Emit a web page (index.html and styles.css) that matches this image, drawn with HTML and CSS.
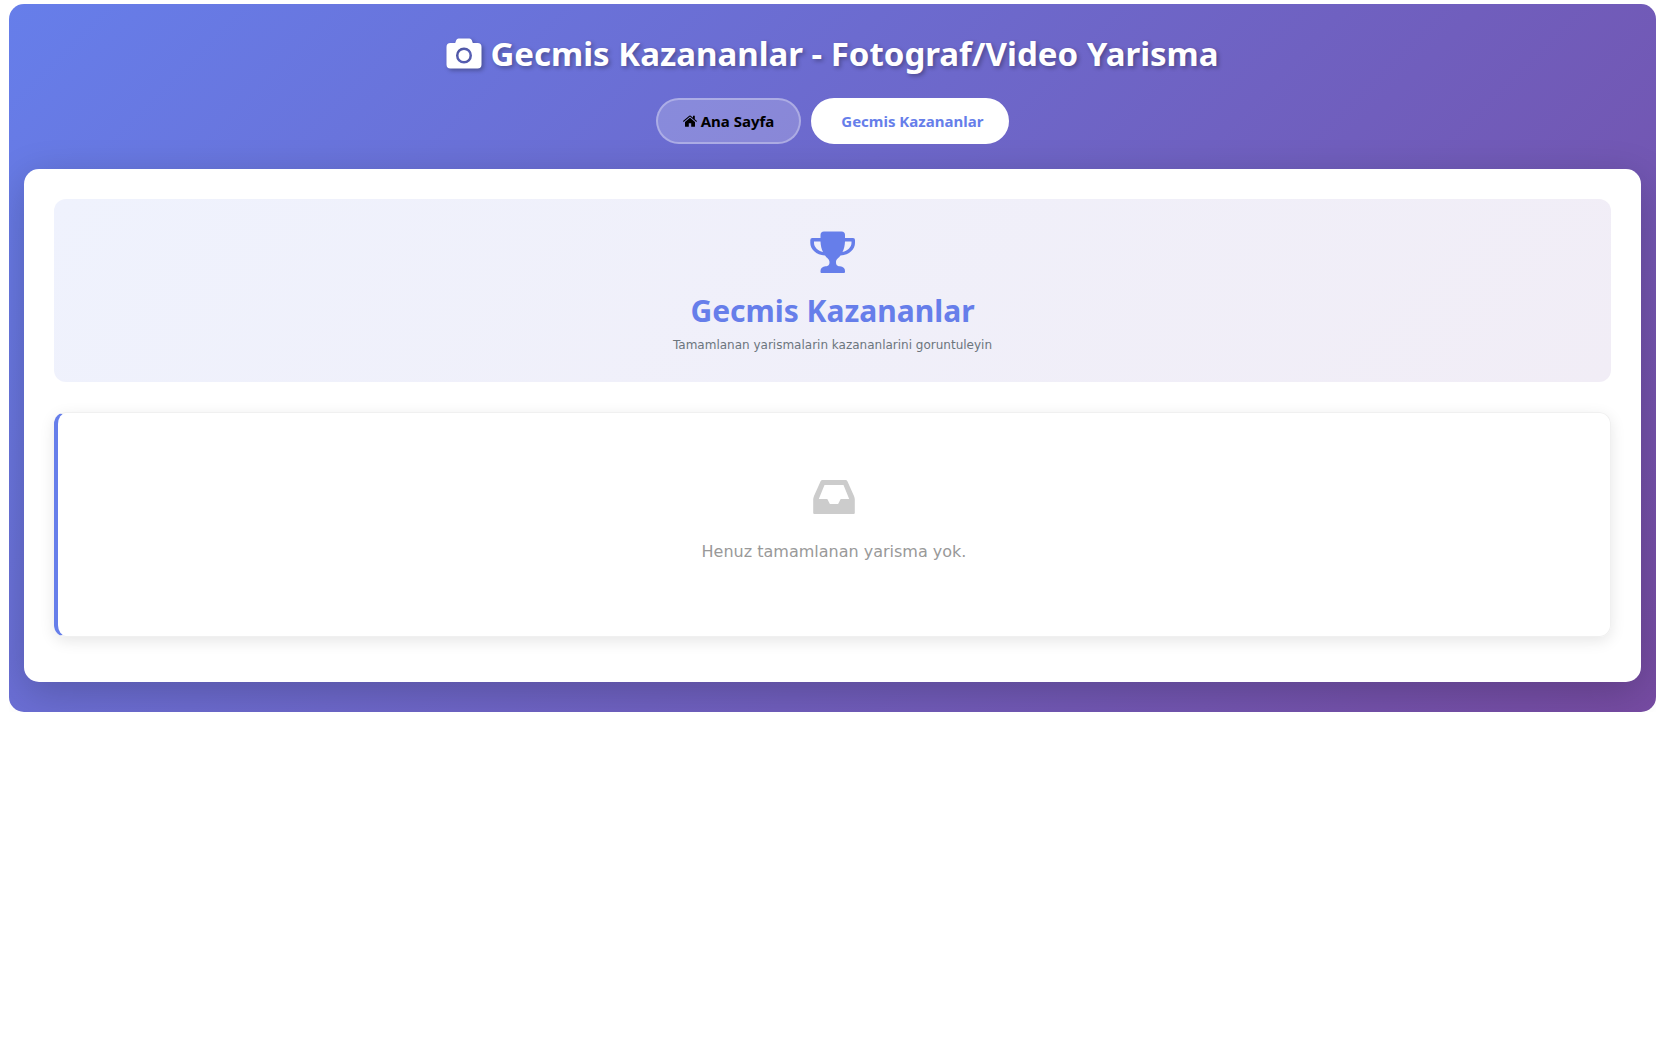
FILE: index.html
```html
<!DOCTYPE html>
<html lang="tr">
<head>
<meta charset="utf-8">
<title>Gecmis Kazananlar</title>
<link rel="stylesheet" href="styles.css">
</head>
<body>
<div class="contest">
  <header class="header">
    <h1 class="title">
      <svg class="title-icon" viewBox="0 0 36 32" aria-hidden="true"><path fill-rule="evenodd" d="M12.500 .5h11q1.600 0 2.200 1.500L26.800 5H31.500q4 0 4 4V26.500q0 4-4 4H4.500q-4 0-4-4V9q0-4 4-4H9.200L10.300 2Q10.900 .5 12.500 .5ZM18 9.500a8 8 0 1 0 0 16a8 8 0 0 0 0-16ZM18 12a5.500 5.500 0 1 1 0 11a5.500 5.500 0 0 1 0-11Z"/></svg>
      Gecmis Kazananlar - Fotograf/Video Yarisma
    </h1>
    <nav class="nav">
      <a class="nav-link" href="#home">
        <svg class="home-icon" viewBox="0 0 14 12" aria-hidden="true"><path d="M7 2.800 2 7v4.200q0 .6.600.6H5.800V8.200h2.400v3.600h3.200q.6 0 .6-.6V7ZM.6 6.900 7 1.600l6.400 5.300.6-.8-2.200-1.800V.8H10v2L7.700.8Q7 .3 6.300.8L0 6.100Z"/></svg>
        Ana Sayfa
      </a>
      <a class="nav-link nav-link-active" href="#winners">Gecmis Kazananlar</a>
    </nav>
  </header>
  <main class="content">
    <section class="hero">
      <svg class="trophy" viewBox="0 0 45 42" aria-hidden="true"><path fill-rule="evenodd" d="M14 .5H31.500Q35 .5 35 4V7H43q2 0 2 2v3c0 6-5.500 12-14.500 12.500C29 27 26 28 26 31c0 3 1 4 4 4.300 3 .3 5 2 5 4.700v1q0 1-1 1H11.500q-1 0-1-1v-1c0-2.700 2-4.400 5-4.700 3-.3 4-1.300 4-4.300 0-3-3-4-4.500-6.500C6 24 .3 18 .3 12V9q0-2 2-2h8.200V4Q10.500.5 14 .5ZM4 10.500V12c0 4 4 8 9 9-1.500-3-2.300-6.500-2.500-10.500ZM35 10.500c-.2 4-1 7.500-2.500 10.500 5-1 9-5 9-9v-1.500Z"/></svg>
      <h2 class="hero-title">Gecmis Kazananlar</h2>
      <p class="hero-text">Tamamlanan yarismalarin kazananlarini goruntuleyin</p>
    </section>
    <section class="empty">
      <svg class="inbox" viewBox="0 0 42 34" aria-hidden="true"><path fill-rule="evenodd" d="M9.500 0h23q1.300 0 1.900 1.200L41 16q.8 2 .8 3.500V33q0 1-1.200 1H1.400Q.2 34 .2 33V19.500Q.2 18 1 16L7.600 1.200Q8.200 0 9.500 0ZM11.500 5 5.800 19h8.500l2.600 5h8.200l2.600-5h8.500L30.500 5Z"/></svg>
      <p class="empty-text">Henuz tamamlanan yarisma yok.</p>
    </section>
  </main>
</div>
</body>
</html>
```
FILE: styles.css
```css
* { box-sizing: border-box; }
body {
  margin: 4px 10px 4px 9px;
  background: #fff;
  font-family: "DejaVu Sans", Verdana, sans-serif;
}
h1, h2, p { margin: 0; }
.contest {
  padding: 30px 15px;
  border-radius: 15px;
  background: linear-gradient(135deg, #667eea 0%, #764ba2 100%);
}
.header {
  display: flex;
  flex-direction: column;
  align-items: center;
  gap: 24px;
  margin-bottom: 25px;
}
.title {
  display: flex;
  align-items: center;
  gap: 8px;
  color: #fff;
  font: bold 33px/40px "Noto Sans", Tahoma, sans-serif;
  text-shadow: 2px 2px 4px rgba(0, 0, 0, 0.3);
}
.title-icon {
  width: 36px;
  height: 32px;
  fill: currentColor;
  filter: drop-shadow(2px 2px 2px rgba(0, 0, 0, 0.3));
}
.nav { display: flex; gap: 10px; }
.nav-link {
  display: flex;
  align-items: center;
  gap: 4px;
  height: 46px;
  padding: 0 25px;
  border: 2px solid rgba(255, 255, 255, 0.3);
  border-radius: 25px;
  background: rgba(255, 255, 255, 0.2);
  color: #000;
  font: bold 15px/20px "Noto Sans", Tahoma, sans-serif;
  text-decoration: none;
}
.nav-link-active {
  padding: 0 24px 0 28px;
  border-color: #fff;
  background: #fff;
  color: #667eea;
}
.home-icon { width: 14px; height: 12px; fill: currentColor; }
.content {
  padding: 30px 30px 45px;
  border-radius: 15px;
  background: #fff;
  box-shadow: 0 10px 40px rgba(0, 0, 0, 0.2);
}
.hero, .empty {
  display: flex;
  flex-direction: column;
  align-items: center;
  border-radius: 12px;
}
.hero {
  margin-bottom: 30px;
  padding: 32px 30px 27px;
  background: linear-gradient(135deg, #eff2fd 0%, #f1edf6 100%);
}
.trophy { width: 45px; height: 42px; fill: #667eea; }
.hero-title {
  margin-top: 20px;
  color: #667eea;
  font: bold 30px/36px "Noto Sans", Tahoma, sans-serif;
}
.hero-text { margin-top: 6px; color: #6c757d; font-size: 12px; line-height: 20px; }
.empty {
  padding: 67px 30px 72px;
  border: 1px solid #f0f0f0;
  border-left: 4px solid #667eea;
  box-shadow: 0 4px 15px rgba(0, 0, 0, 0.1);
}
.inbox { width: 42px; height: 34px; fill: #ccc; }
.empty-text { margin-top: 26px; color: #999; font-size: 16px; line-height: 24px; }
```
